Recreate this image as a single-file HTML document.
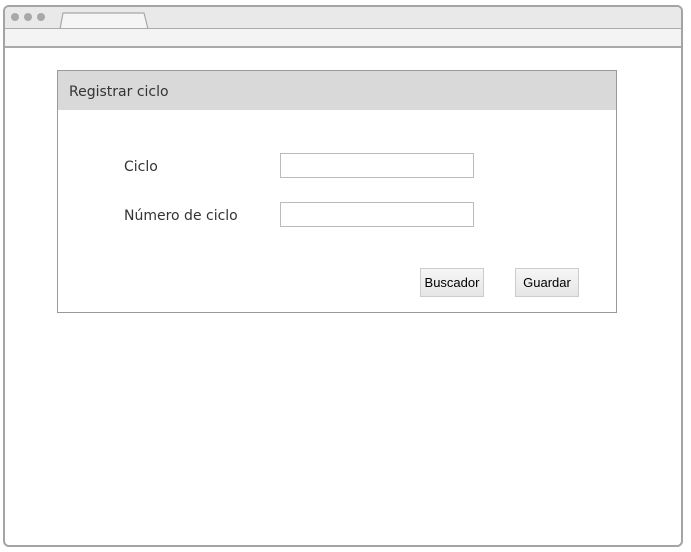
<!DOCTYPE html>
<html><head><style>
body{margin:0;width:691px;height:552px;background:#fff;position:relative;overflow:hidden;font-family:"Liberation Sans",sans-serif}
div,svg{position:absolute;box-sizing:border-box}
.dot{width:8px;height:8px;border-radius:50%;background:#a8a8a8;top:13px}
.lbl{font-family:"DejaVu Sans","Liberation Sans",sans-serif;font-size:14px;color:#333}
.in{border:1px solid #bbb;background:#fff;width:194px;height:25px;left:280px}
.btn{border:1px solid #ccc;background:linear-gradient(#f6f6f6,#e6e6e6);height:29px;width:64px;top:268px;font-size:13px;color:#000;text-align:center;line-height:27px}
</style></head><body>
<div style="left:3px;top:5px;width:680px;height:542px;border:2px solid #a4a4a4;border-radius:6px;background:#fff"></div>
<div style="left:5px;top:7px;width:676px;height:21px;background:#e9e9ea;border-radius:4px 4px 0 0"></div>
<div class="dot" style="left:11px"></div><div class="dot" style="left:24px"></div><div class="dot" style="left:37px"></div>
<svg style="left:58px;top:11px" width="94" height="19"><path d="M2 18 L5 2 L86 2 L90 18 Z" fill="#f5f5f6" stroke="#a8a8a8" stroke-width="1.2"/></svg>
<div style="left:5px;top:28px;width:676px;height:20px;background:#f4f4f5;border-top:1px solid #aaa;border-bottom:2px solid #aaa"></div>
<div style="left:57px;top:70px;width:560px;height:243px;border:1px solid #999;background:#fff"></div>
<div style="left:58px;top:71px;width:558px;height:39px;background:#d9d9d9"></div>
<div class="lbl" style="left:69px;top:84px">Registrar ciclo</div>
<div class="lbl" style="left:124px;top:159px">Ciclo</div>
<div class="lbl" style="left:124px;top:208px">Número de ciclo</div>
<div class="in" style="top:153px"></div>
<div class="in" style="top:202px"></div>
<div class="btn" style="left:420px">Buscador</div>
<div class="btn" style="left:515px">Guardar</div>
</body></html>
